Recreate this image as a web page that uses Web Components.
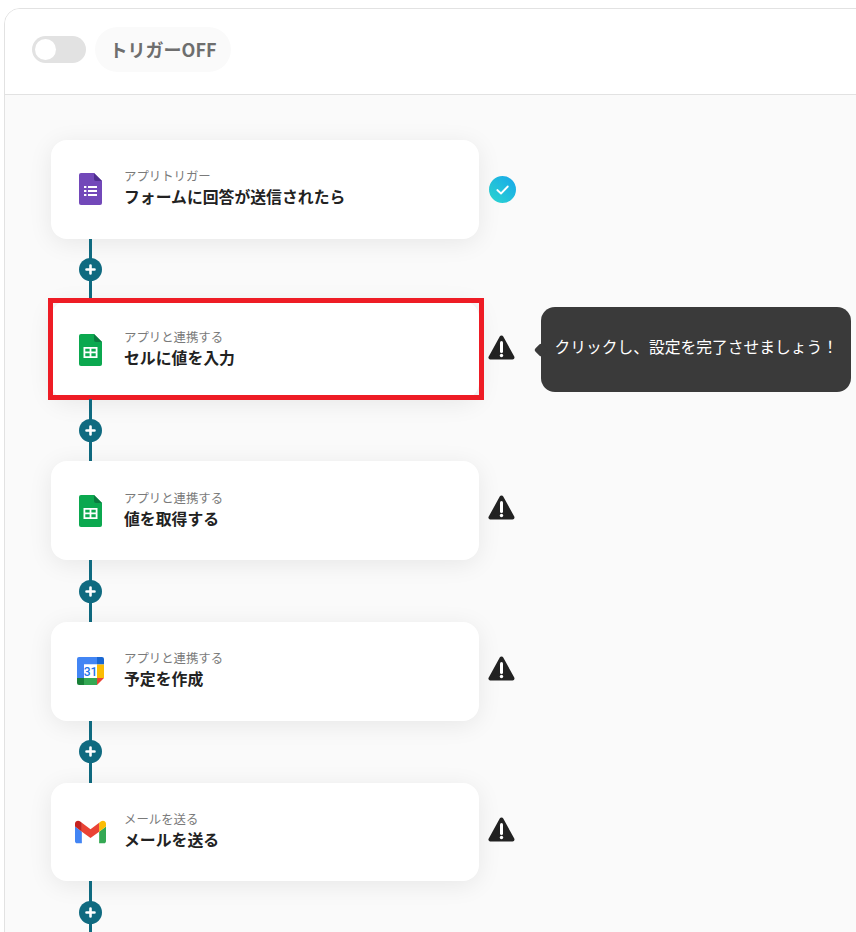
<!DOCTYPE html>
<html lang="ja">
<head>
<meta charset="utf-8">
<title>フロー</title>
<style>
  html, body { margin: 0; height: 100%; overflow: hidden; background: #fff; }
  body { font-family: "Noto Sans CJK JP", "Noto Sans", sans-serif; }
</style>
</head>
<body>
<flow-panel>
  <trigger-switch slot="header">トリガーOFF</trigger-switch>

  <flow-step icon="forms" status="done" label="アプリトリガー">フォームに回答が送信されたら</flow-step>
  <step-connector></step-connector>
  <flow-step icon="sheets" status="warn" label="アプリと連携する" highlight>
    セルに値を入力
    <step-tip slot="tip">クリックし、設定を完了させましょう！</step-tip>
  </flow-step>
  <step-connector></step-connector>
  <flow-step icon="sheets" status="warn" label="アプリと連携する">値を取得する</flow-step>
  <step-connector></step-connector>
  <flow-step icon="calendar" status="warn" label="アプリと連携する">予定を作成</flow-step>
  <step-connector></step-connector>
  <flow-step icon="gmail" status="warn" label="メールを送る">メールを送る</flow-step>
  <step-connector></step-connector>
</flow-panel>

<script>
// app icons, drawn to the size they have in the screenshot
const APP_ICONS = {
  forms: `<svg width="23" height="32" viewBox="0 0 23 32">
    <path fill="#7248b9" d="M2 0h13l8 8v22a2 2 0 0 1-2 2H2a2 2 0 0 1-2-2V2a2 2 0 0 1 2-2z"/>
    <path fill="#4f2f8f" d="M15 0v6a2 2 0 0 0 2 2h6z"/>
    <g fill="#fff">
      <rect x="5" y="13" width="2.4" height="2"/><rect x="9" y="13" width="9" height="2"/>
      <rect x="5" y="17" width="2.4" height="2"/><rect x="9" y="17" width="9" height="2"/>
      <rect x="5" y="21" width="2.4" height="2"/><rect x="9" y="21" width="9" height="2"/>
    </g></svg>`,
  sheets: `<svg width="23" height="32" viewBox="0 0 23 32">
    <path fill="#0ba84f" d="M2 0h13l8 8v22a2 2 0 0 1-2 2H2a2 2 0 0 1-2-2V2a2 2 0 0 1 2-2z"/>
    <path fill="#0b7a40" d="M15 0v6a2 2 0 0 0 2 2h6z"/>
    <path fill="#fff" fill-rule="evenodd" d="M4.500 13h14v11h-14z M6.300 14.800v2.800h4.300v-2.800z M12.400 14.800v2.800h4.300v-2.800z M6.300 19.300v2.900h4.300v-2.900z M12.400 19.300v2.900h4.300v-2.900z"/></svg>`,
  calendar: `<svg width="27" height="28" viewBox="0 0 27 28" style="margin-left:1px">
    <path fill="#4285f4" d="M2 0h18v7.500H7V21H0V2a2 2 0 0 1 2-2z"/>
    <path fill="#1967d2" d="M20 0h5a2 2 0 0 1 2 2v5.500h-7z"/>
    <rect x="7" y="7.500" width="13" height="13.500" fill="#fff"/>
    <rect x="20" y="7.500" width="7" height="13.500" fill="#fbbc04"/>
    <rect x="7" y="21" width="13" height="7" fill="#34a853"/>
    <path fill="#188038" d="M0 21h7v7H2a2 2 0 0 1-2-2z"/>
    <path fill="#ea4335" d="M20 21h7l-7 7z"/>
    <text x="13.500" y="19" text-anchor="middle" font-size="12" font-weight="500" fill="#1a73e8" font-family="Roboto, sans-serif">31</text></svg>`,
  gmail: `<svg width="31" height="23.300" viewBox="0 0 24 18" style="margin-left:1px">
    <path fill="#4285f4" d="M1.600 18h3.700V9L0 5v11.400C0 17.300.7 18 1.600 18z"/>
    <path fill="#34a853" d="M18.700 18h3.700c.9 0 1.600-.7 1.600-1.600V5l-5.300 4z"/>
    <path fill="#fbbc04" d="M18.700 2.100V9L24 5V2.900c0-2-2.300-3.100-3.800-1.900z"/>
    <path fill="#ea4335" d="M5.300 9V2.100l6.700 5 6.700-5V9L12 14z"/>
    <path fill="#c5221f" d="M0 2.900V5l5.300 4V2.100L3.800 1C2.300-.2 0 .9 0 2.900z"/></svg>`
};

const STATUS_ICONS = {
  done: `<svg width="27" height="27" viewBox="0 0 27 27" style="margin:1px 0 0 1px">
    <defs><linearGradient id="g" x1="0" y1="1" x2="1" y2="0"><stop offset="0" stop-color="#2cd8cf"/><stop offset="1" stop-color="#17a5ea"/></linearGradient></defs>
    <circle cx="13.500" cy="13.500" r="13.500" fill="url(#g)"/>
    <path d="M8.300 14l3.700 3.500 6.800-7" fill="none" stroke="#fff" stroke-width="1.800" stroke-linecap="round" stroke-linejoin="round"/></svg>`,
  warn: `<svg width="27" height="25" viewBox="0 0 27 25" style="margin-top:-6px">
    <path d="M13.500 2.500L2.500 22.500h22z" fill="#222" stroke="#222" stroke-width="4" stroke-linejoin="round"/>
    <path d="M13.500 7.500v9" stroke="#fff" stroke-width="3" stroke-linecap="round"/>
    <circle cx="13.500" cy="20.500" r="1.700" fill="#fff"/></svg>`
};

class FlowPanel extends HTMLElement {
  constructor() {
    super();
    this.attachShadow({ mode: 'open' });
    this.shadowRoot.innerHTML = `
      <style>
        :host {
          display: block;
          width: 880px;
          height: 1000px;
          margin: 8px 0 0 4px;
          background: #fafafa;
          border: 1px solid #e2e2e2;
          border-radius: 16px 0 0 0;
          overflow: hidden;
        }
        header {
          display: flex;
          align-items: center;
          height: 81px;
          padding: 0 0 4px 27px;
          background: #fff;
          border-bottom: 1px solid #e2e2e2;
        }
        main {
          display: flex;
          flex-direction: column;
          padding: 45px 0 0 46px;
        }
      </style>
      <header><slot name="header"></slot></header>
      <main><slot></slot></main>
    `;
  }
}

class TriggerSwitch extends HTMLElement {
  constructor() {
    super();
    this.attachShadow({ mode: 'open' });
    this.shadowRoot.innerHTML = `
      <style>
        :host { display: flex; align-items: center; gap: 9px; }
        .track {
          width: 54px; height: 27px; box-sizing: border-box;
          padding: 3px; border-radius: 14px; background: #e2e2e2;
        }
        .knob { width: 21px; height: 21px; border-radius: 50%; background: #fff; }
        .pill {
          display: flex; align-items: center; justify-content: center;
          width: 136px; height: 45px; border-radius: 23px;
          background: #fafafa; color: #6e6e6e;
          font-size: 18px; font-weight: 700;
        }
        .pill span { position: relative; top: -1px; }
      </style>
      <div class="track"><div class="knob"></div></div>
      <div class="pill"><span><slot></slot></span></div>
    `;
  }
}

class FlowStep extends HTMLElement {
  constructor() {
    super();
    this.attachShadow({ mode: 'open' });
  }

  connectedCallback() {
    const icon = this.getAttribute('icon');
    const status = this.getAttribute('status');
    const label = this.getAttribute('label') || '';
    this.shadowRoot.innerHTML = `
      <style>
        :host { display: flex; align-items: center; gap: 9px; position: relative; }
        .card {
          position: relative;
          display: flex; align-items: center;
          width: 428px; height: 98.700px;
          background: #fff; border-radius: 16px;
          box-shadow: 0 4px 24px rgba(0, 0, 0, .08);
        }
        .icon { display: flex; justify-content: center; width: 32px; margin-left: 23px; flex: none; }
        .text { margin-left: 18px; margin-top: -3px; }
        .label { font-size: 12.400px; line-height: 18px; color: #7a7a7a; }
        .title { font-size: 15.850px; line-height: 23px; font-weight: 700; color: #222; }
        .status { display: flex; }
        :host([highlight]) .card::after {
          content: '';
          position: absolute;
          inset: -3px -5px -1px -3px;
          border: 5px solid #ee1c25;
          pointer-events: none;
        }
      </style>
      <div class="card">
        <div class="icon">${APP_ICONS[icon] || ''}</div>
        <div class="text">
          <div class="label">${label}</div>
          <div class="title"><slot></slot></div>
        </div>
      </div>
      <div class="status">${STATUS_ICONS[status] || ''}</div>
      <slot name="tip"></slot>
    `;
  }
}

class StepConnector extends HTMLElement {
  constructor() {
    super();
    this.attachShadow({ mode: 'open' });
    this.shadowRoot.innerHTML = `
      <style>
        :host {
          display: flex; align-items: center; justify-content: center;
          width: 23px; height: 62px; margin-left: 28px;
          position: relative;
        }
        .line { position: absolute; top: 0; bottom: 0; left: 10px; width: 3px; background: #0f6a80; }
        svg { position: relative; display: block; }
      </style>
      <div class="line"></div>
      <svg width="23" height="23" viewBox="0 0 23 23">
        <circle cx="11.500" cy="11.500" r="11.500" fill="#0f6a80"/>
        <path d="M11.500 7.500v8M7.500 11.500h8" stroke="#fff" stroke-width="2.600" stroke-linecap="round"/>
      </svg>
    `;
  }
}

class StepTip extends HTMLElement {
  constructor() {
    super();
    this.attachShadow({ mode: 'open' });
    this.shadowRoot.innerHTML = `
      <style>
        :host {
          position: absolute;
          left: 490px; top: 6px;
          display: flex; align-items: center;
          box-sizing: border-box;
          width: 310px; height: 85px;
          padding-left: 13.500px;
          background: #3a3a3a; border-radius: 14px;
          color: #fff; font-size: 15.750px; white-space: nowrap;
        }
        :host::before {
          content: '';
          position: absolute;
          left: -5px; top: 38px;
          width: 10px; height: 10px;
          background: #3a3a3a;
          transform: rotate(45deg);
          border-radius: 2px;
        }
        span { position: relative; top: -3px; }
      </style>
      <span><slot></slot></span>
    `;
  }
}

customElements.define('flow-panel', FlowPanel);
customElements.define('trigger-switch', TriggerSwitch);
customElements.define('flow-step', FlowStep);
customElements.define('step-connector', StepConnector);
customElements.define('step-tip', StepTip);
</script>
</body>
</html>
